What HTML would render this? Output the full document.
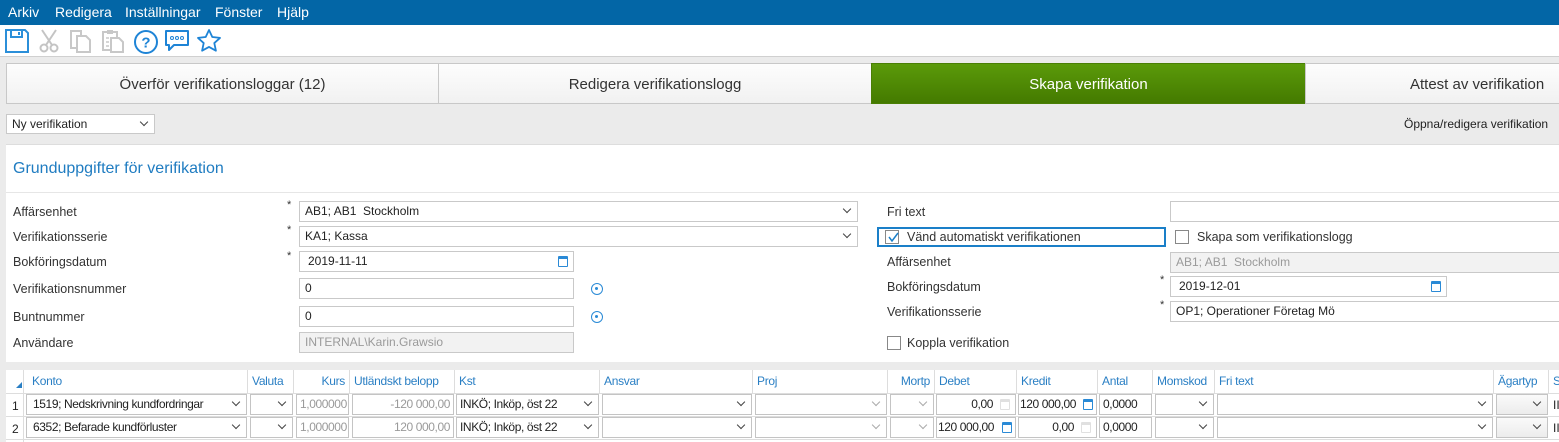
<!DOCTYPE html>
<html><head><meta charset="utf-8"><style>
*{box-sizing:border-box;margin:0;padding:0}
body{width:1559px;height:442px;overflow:hidden;background:#ebebeb;font-family:"Liberation Sans",sans-serif;font-size:12px;color:#222;position:relative}
.a{position:absolute;white-space:nowrap}
.menu{left:0;top:0;width:1559px;height:25px;background:#0366a6;color:#fff;font-size:14px}
.menu span{position:absolute;top:4px}
.tool{left:0;top:25px;width:1559px;height:32px;background:#fff;border-bottom:1px solid #d0d0d0}
.tab{top:63px;height:41px;border:1px solid #c8c8c8;background:linear-gradient(#fdfdfd,#f1f1f1);font-size:15px;text-align:center;line-height:41px;color:#333}
.inp{height:21px;border:1px solid #c9c9c9;background:#fff;padding-left:5px;line-height:19px;font-size:12px}
.dis{background:#f2f2f2;color:#9a9a9a}
.lbl{font-size:12.5px;color:#333}
.chev{position:absolute;right:7px;top:4px;width:6px;height:6px;border-right:1.3px solid #444;border-bottom:1.3px solid #444;transform:rotate(45deg)}
.chev.g{border-color:#aaa}
.cb{width:14px;height:14px;border:1px solid #888;background:#fff}
.hd{top:370px;height:23px;line-height:23px;color:#2a7fc4;font-size:12px;border-right:1px solid #ddd;padding:0 4px;background:#fff;letter-spacing:-0.3px}
.c{height:21px;border:1px solid #c4c4c4;background:#fff;line-height:19px;padding:0 3px;font-size:12px;overflow:hidden;letter-spacing:-0.4px}
.r{text-align:right}
.cal{position:absolute;right:5px;top:4px;width:10px;height:11px;border:1.3px solid #2a8ad6;border-top-width:3px;border-radius:1px}
.cal.g{border-color:#e0e0e0}
.ast{font-size:11px;color:#333}
.plus{width:12px;height:12px;border:1.3px solid #2a8ad6;border-radius:50%}
.plus:after{content:"";position:absolute;left:3px;top:3px;width:3px;height:3px;background:#2a8ad6;border-radius:50%}
</style></head><body>
<div class="a menu"><span style="left:8px">Arkiv</span><span style="left:55px">Redigera</span><span style="left:125px">Inställningar</span><span style="left:215px">Fönster</span><span style="left:277px">Hjälp</span></div>
<div class="a tool">
<svg class="a" style="left:4px;top:3px" width="26" height="26" viewBox="0 0 26 26"><path d="M2 2h19l3 3v19H2z" fill="none" stroke="#2b8fd9" stroke-width="2"/><path d="M7 3v6h11V3" fill="none" stroke="#2b8fd9" stroke-width="2"/><rect x="14" y="4" width="2" height="3" fill="#2b8fd9"/></svg>
<svg class="a" style="left:37px;top:3px" width="24" height="26" viewBox="0 0 24 26"><path d="M5 2l10 15M19 2L9 17" stroke="#c4c4c4" stroke-width="2" fill="none"/><circle cx="7" cy="20" r="3.5" stroke="#c4c4c4" stroke-width="2" fill="none"/><circle cx="17" cy="20" r="3.5" stroke="#c4c4c4" stroke-width="2" fill="none"/></svg>
<svg class="a" style="left:68px;top:3px" width="26" height="26" viewBox="0 0 26 26"><path d="M3 3h10v17H3z" fill="none" stroke="#c8c8c8" stroke-width="2"/><path d="M9 8h9l4 4v12H9z" fill="#fff" stroke="#c8c8c8" stroke-width="2"/></svg>
<svg class="a" style="left:100px;top:3px" width="26" height="26" viewBox="0 0 26 26"><path d="M3 4h14v18H3z" fill="none" stroke="#c8c8c8" stroke-width="2"/><rect x="7" y="2" width="6" height="4" fill="#c8c8c8"/><path d="M11 10h8l4 4v10H11z" fill="#fff" stroke="#c8c8c8" stroke-width="2"/><path d="M6 10h3M6 14h3M6 18h3" stroke="#c8c8c8" stroke-width="1.5"/></svg>
<svg class="a" style="left:133px;top:4px" width="26" height="26" viewBox="0 0 26 26"><circle cx="13" cy="13" r="11" fill="none" stroke="#1e84d6" stroke-width="2"/><text x="13" y="18.5" text-anchor="middle" font-family="Liberation Sans" font-size="15" font-weight="bold" fill="#1e84d6">?</text></svg>
<svg class="a" style="left:164px;top:3px" width="26" height="26" viewBox="0 0 26 26"><path d="M2 3h22v14H10l-5 5v-5H2z" fill="none" stroke="#1e84d6" stroke-width="2" stroke-linejoin="round"/><circle cx="8" cy="10" r="1.5" fill="none" stroke="#1e84d6"/><circle cx="13" cy="10" r="1.5" fill="none" stroke="#1e84d6"/><circle cx="18" cy="10" r="1.5" fill="none" stroke="#1e84d6"/></svg>
<svg class="a" style="left:196px;top:3px" width="26" height="26" viewBox="0 0 26 26"><path d="M13 2l3.3 7 7.7.9-5.7 5.2 1.6 7.6L13 18.9l-6.9 3.8 1.6-7.6L2 9.9l7.7-.9z" fill="none" stroke="#1e84d6" stroke-width="1.8" stroke-linejoin="round"/></svg>
</div>
<div class="a tab" style="left:6px;width:433px">Överför verifikationsloggar (12)</div>
<div class="a tab" style="left:438px;width:434px">Redigera verifikationslogg</div>
<div class="a tab" style="left:871px;width:435px;background:linear-gradient(#5b9a0a,#447a00);color:#fff;border-color:#4a7f05">Skapa verifikation</div>
<div class="a tab" style="left:1305px;width:290px;text-align:left;padding-left:104px">Attest av verifikation</div>
<div class="a inp" style="left:6px;top:114px;width:149px;height:20px;font-size:12px;line-height:18px">Ny verifikation<span class="chev" style="top:4px"></span></div>
<div class="a" style="left:1404px;top:117px;font-size:12px">Öppna/redigera verifikation</div>
<div class="a" style="left:6px;top:144px;width:1553px;height:218px;background:#fff;border-top:1px solid #ddd"></div>
<div class="a" style="left:6px;top:192px;width:1553px;height:1px;background:#e6e6e6"></div>
<div class="a" style="left:13px;top:160px;font-size:16px;color:#1f7cc1">Grunduppgifter för verifikation</div>
<div class="a lbl" style="left:13px;top:205px">Affärsenhet</div>
<div class="a lbl" style="left:13px;top:230px">Verifikationsserie</div>
<div class="a lbl" style="left:13px;top:255px">Bokföringsdatum</div>
<div class="a lbl" style="left:13px;top:282px">Verifikationsnummer</div>
<div class="a lbl" style="left:13px;top:310px">Buntnummer</div>
<div class="a lbl" style="left:13px;top:336px">Användare</div>
<div class="a ast" style="left:287px;top:199px">*</div><div class="a ast" style="left:287px;top:224px">*</div><div class="a ast" style="left:287px;top:250px">*</div>
<div class="a inp" style="left:299px;top:201px;width:559px">AB1; AB1&nbsp; Stockholm<span class="chev"></span></div>
<div class="a inp" style="left:299px;top:226px;width:559px">KA1; Kassa<span class="chev"></span></div>
<div class="a inp" style="left:299px;top:251px;width:275px;padding-left:8px">2019-11-11<span class="cal"></span></div>
<div class="a inp" style="left:299px;top:278px;width:275px">0</div>
<div class="a inp" style="left:299px;top:306px;width:275px">0</div>
<div class="a inp dis" style="left:299px;top:332px;width:275px">INTERNAL\Karin.Grawsio</div>
<div class="a plus" style="left:591px;top:283px"></div><div class="a plus" style="left:591px;top:311px"></div>
<div class="a lbl" style="left:887px;top:205px">Fri text</div>
<div class="a inp" style="left:1170px;top:201px;width:400px"></div>
<div class="a" style="left:877px;top:227px;width:289px;height:20px;border:2px solid #1a7fc8"></div>
<div class="a cb" style="left:885px;top:230px"></div>
<svg class="a" style="left:886px;top:230px" width="14" height="14"><path d="M3 7l3 4 6-8" stroke="#1a7fc8" stroke-width="1.5" fill="none"/></svg>
<div class="a lbl" style="left:907px;top:230px">Vänd automatiskt verifikationen</div>
<div class="a cb" style="left:1175px;top:230px"></div>
<div class="a lbl" style="left:1197px;top:230px">Skapa som verifikationslogg</div>
<div class="a lbl" style="left:887px;top:255px">Affärsenhet</div>
<div class="a inp dis" style="left:1170px;top:252px;width:400px">AB1; AB1&nbsp; Stockholm</div>
<div class="a lbl" style="left:887px;top:280px">Bokföringsdatum</div>
<div class="a ast" style="left:1160px;top:274px">*</div><div class="a ast" style="left:1160px;top:299px">*</div>
<div class="a inp" style="left:1170px;top:276px;width:277px;padding-left:8px">2019-12-01<span class="cal"></span></div>
<div class="a lbl" style="left:887px;top:305px">Verifikationsserie</div>
<div class="a inp" style="left:1170px;top:301px;width:400px">OP1; Operationer Företag Mö</div>
<div class="a cb" style="left:887px;top:336px"></div>
<div class="a lbl" style="left:907px;top:336px">Koppla verifikation</div>
<div class="a" style="left:6px;top:370px;width:1553px;height:72px;background:#fff"></div>
<div class="a" style="left:6px;top:393px;width:1553px;height:1px;background:#ddd"></div>
<div class="a" style="left:6px;top:416px;width:1553px;height:1px;background:#ddd"></div>
<div class="a" style="left:6px;top:439px;width:1553px;height:1px;background:#ddd"></div>
<div class="a" style="left:6px;top:370px;width:18px;height:72px;border-right:1px solid #ddd"></div>
<svg class="a" style="left:16px;top:382px" width="6" height="6"><path d="M6 0v6H0z" fill="#2a7fc4"/></svg>
<div class="a" style="left:12px;top:399px">1</div><div class="a" style="left:12px;top:422px">2</div>
<div class="a hd" style="left:24px;width:224px;padding-left:8px">Konto</div>
<div class="a hd" style="left:248px;width:46px">Valuta</div>
<div class="a hd r" style="left:294px;width:56px">Kurs</div>
<div class="a hd" style="left:350px;width:105px">Utländskt belopp</div>
<div class="a hd" style="left:455px;width:145px">Kst</div>
<div class="a hd" style="left:600px;width:153px">Ansvar</div>
<div class="a hd" style="left:753px;width:135px">Proj</div>
<div class="a hd r" style="left:888px;width:47px">Mortp</div>
<div class="a hd" style="left:935px;width:82px">Debet</div>
<div class="a hd" style="left:1017px;width:81px">Kredit</div>
<div class="a hd" style="left:1098px;width:55px">Antal</div>
<div class="a hd" style="left:1153px;width:62px">Momskod</div>
<div class="a hd" style="left:1215px;width:279px">Fri text</div>
<div class="a hd" style="left:1494px;width:55px">Ägartyp</div>
<div class="a hd" style="left:1549px;width:20px">S</div>
<!-- row1 -->
<div class="a c" style="left:26px;top:394px;width:221px;padding-left:6px">1519; Nedskrivning kundfordringar<span class="chev"></span></div>
<div class="a c" style="left:250px;top:394px;width:43px"><span class="chev"></span></div>
<div class="a c r dis" style="left:296px;top:394px;width:53px">1,000000</div>
<div class="a c r dis" style="left:352px;top:394px;width:102px">-120 000,00</div>
<div class="a c" style="left:456px;top:394px;width:143px">INKÖ; Inköp, öst 22<span class="chev"></span></div>
<div class="a c" style="left:602px;top:394px;width:150px"><span class="chev"></span></div>
<div class="a c dis" style="left:755px;top:394px;width:132px"><span class="chev g"></span></div>
<div class="a c dis" style="left:890px;top:394px;width:44px"><span class="chev g"></span></div>
<div class="a c r" style="left:936px;top:394px;width:80px;padding-right:22px">0,00<span class="cal g"></span></div>
<div class="a c" style="left:1018px;top:394px;width:79px;padding-left:1px">120 000,00<span class="cal" style="right:3px"></span></div>
<div class="a c" style="left:1099px;top:394px;width:53px">0,0000</div>
<div class="a c" style="left:1155px;top:394px;width:59px"><span class="chev"></span></div>
<div class="a c" style="left:1217px;top:394px;width:276px"><span class="chev"></span></div>
<div class="a c" style="left:1496px;top:394px;width:52px;background:linear-gradient(#fafafa,#ececec)"><span class="chev"></span></div>
<div class="a" style="left:1553px;top:398px">II</div>
<!-- row2 -->
<div class="a c" style="left:26px;top:417px;width:221px;padding-left:6px">6352; Befarade kundförluster<span class="chev"></span></div>
<div class="a c" style="left:250px;top:417px;width:43px"><span class="chev"></span></div>
<div class="a c r dis" style="left:296px;top:417px;width:53px">1,000000</div>
<div class="a c r dis" style="left:352px;top:417px;width:102px">120 000,00</div>
<div class="a c" style="left:456px;top:417px;width:143px">INKÖ; Inköp, öst 22<span class="chev"></span></div>
<div class="a c" style="left:602px;top:417px;width:150px"><span class="chev"></span></div>
<div class="a c dis" style="left:755px;top:417px;width:132px"><span class="chev g"></span></div>
<div class="a c dis" style="left:890px;top:417px;width:44px"><span class="chev g"></span></div>
<div class="a c" style="left:936px;top:417px;width:80px;padding-left:1px">120 000,00<span class="cal" style="right:3px"></span></div>
<div class="a c r" style="left:1018px;top:417px;width:79px;padding-right:22px">0,00<span class="cal g"></span></div>
<div class="a c" style="left:1099px;top:417px;width:53px">0,0000</div>
<div class="a c" style="left:1155px;top:417px;width:59px"><span class="chev"></span></div>
<div class="a c" style="left:1217px;top:417px;width:276px"><span class="chev"></span></div>
<div class="a c" style="left:1496px;top:417px;width:52px;background:linear-gradient(#fafafa,#ececec)"><span class="chev"></span></div>
<div class="a" style="left:1553px;top:421px">II</div>
</body></html>
